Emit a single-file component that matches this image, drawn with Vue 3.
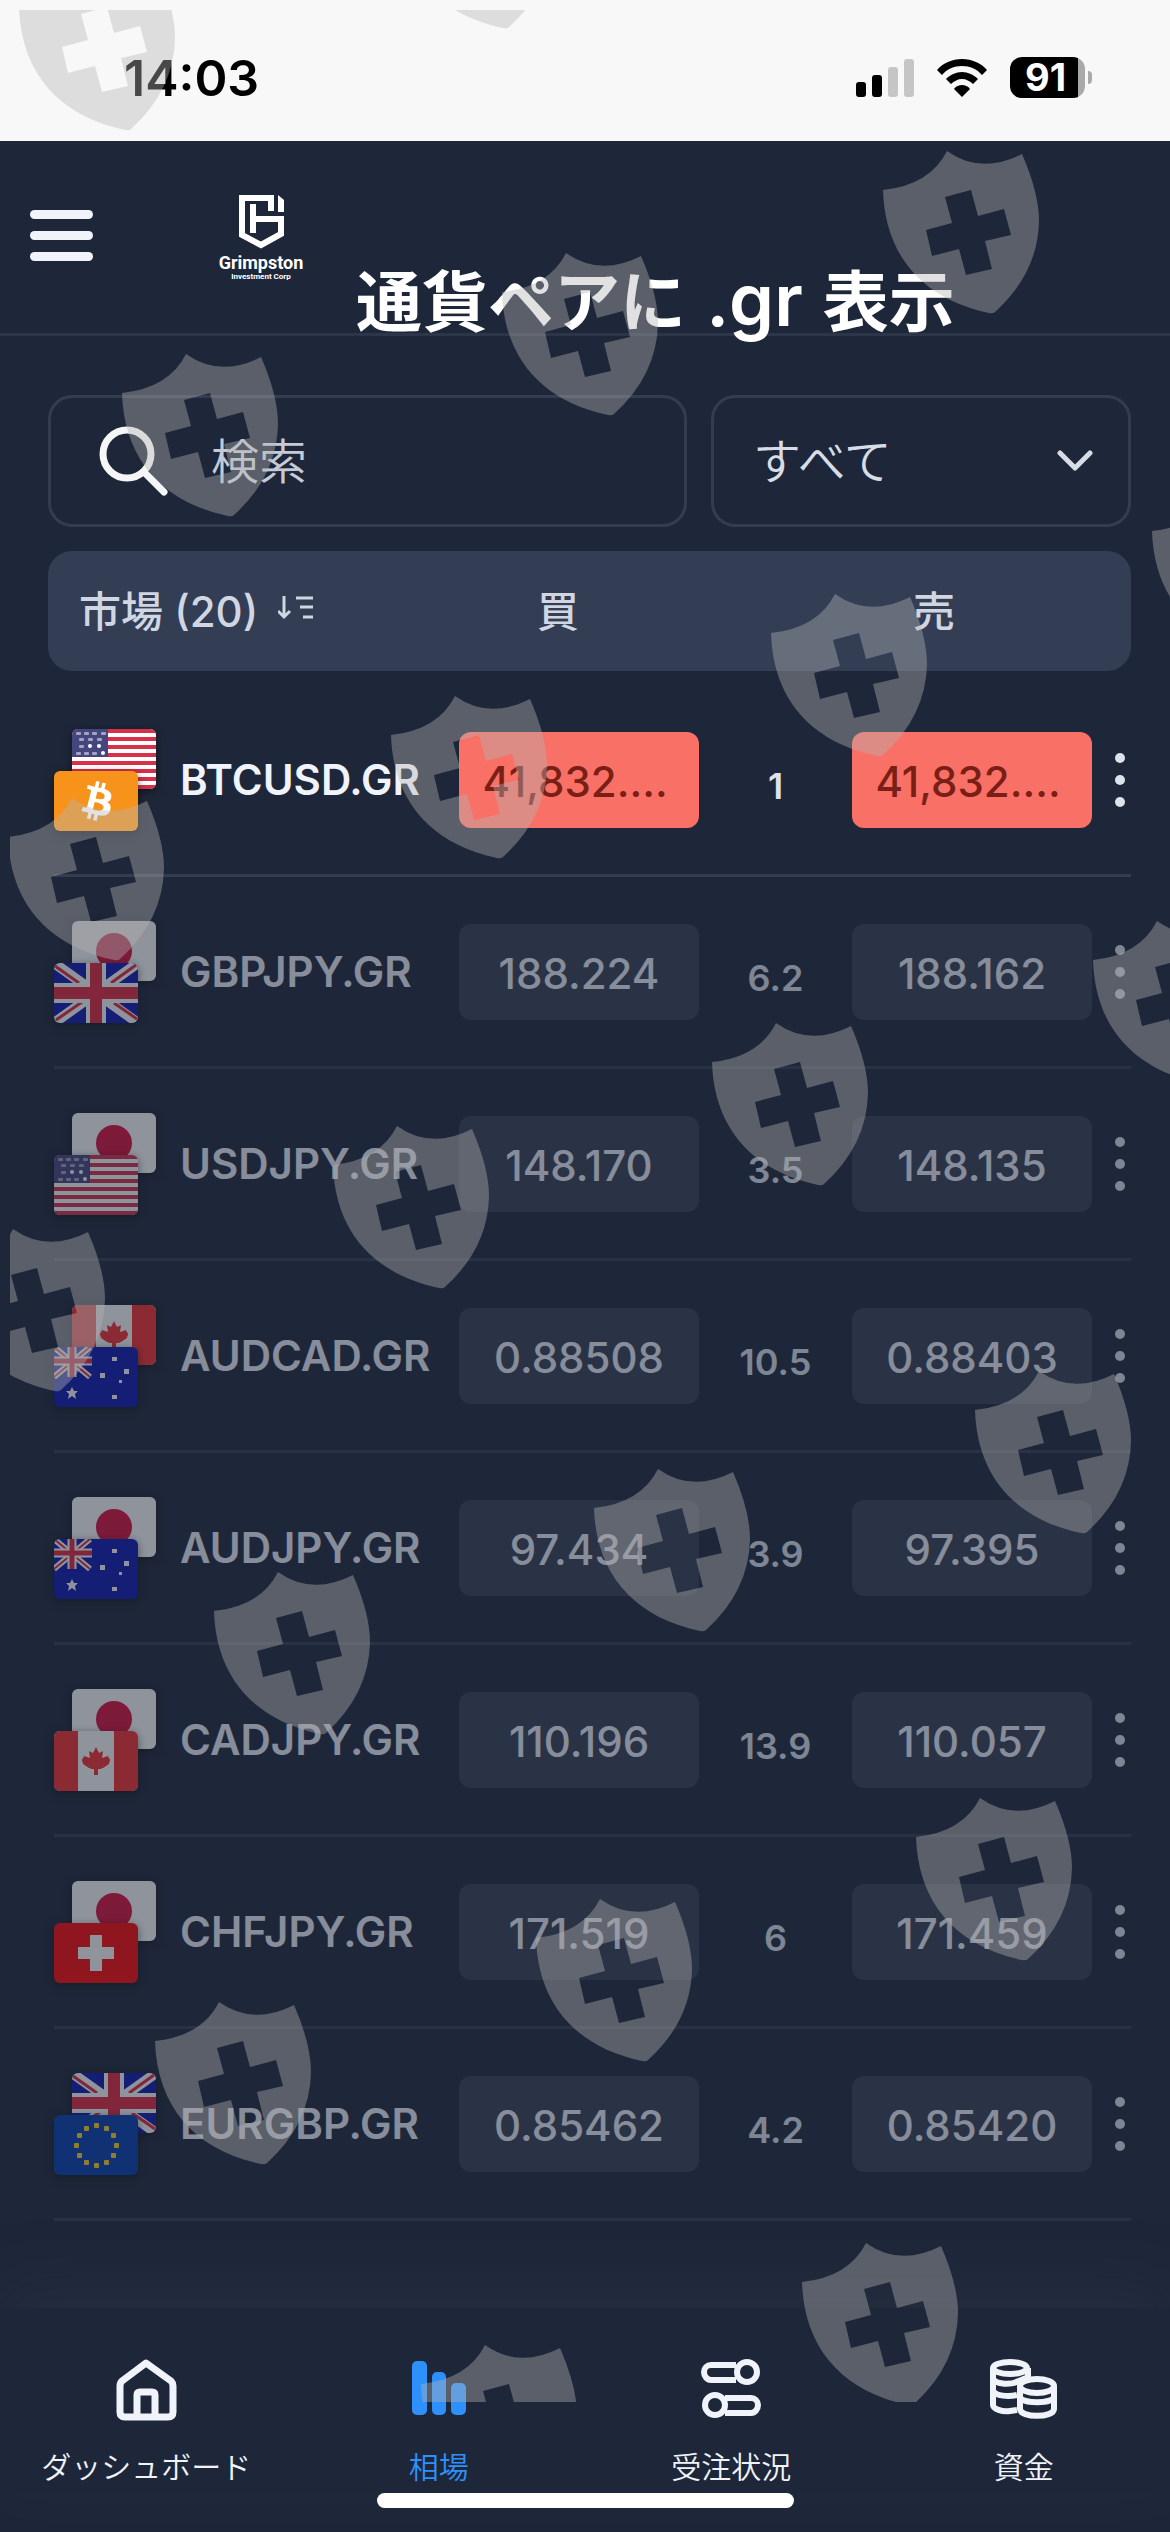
<script setup>
import { ref } from 'vue'

const search = ref('')
const filter = ref('all')

const markets = [
  { symbol: 'BTCUSD.GR', base: 'btc', quote: 'us', buy: '41,832.…', spread: '1', sell: '41,832.…', open: true },
  { symbol: 'GBPJPY.GR', base: 'gb', quote: 'jp', buy: '188.224', spread: '6.2', sell: '188.162' },
  { symbol: 'USDJPY.GR', base: 'us', quote: 'jp', buy: '148.170', spread: '3.5', sell: '148.135' },
  { symbol: 'AUDCAD.GR', base: 'au', quote: 'ca', buy: '0.88508', spread: '10.5', sell: '0.88403' },
  { symbol: 'AUDJPY.GR', base: 'au', quote: 'jp', buy: '97.434', spread: '3.9', sell: '97.395' },
  { symbol: 'CADJPY.GR', base: 'ca', quote: 'jp', buy: '110.196', spread: '13.9', sell: '110.057' },
  { symbol: 'CHFJPY.GR', base: 'ch', quote: 'jp', buy: '171.519', spread: '6', sell: '171.459' },
  { symbol: 'EURGBP.GR', base: 'eu', quote: 'gb', buy: '0.85462', spread: '4.2', sell: '0.85420' },
]

// Top-left corner of every watermark shield on the page canvas
const shields = [
  [19, -32], [397, -134], [883, 151], [502, 253], [122, 354], [1152, 492], [771, 594],
  [391, 696], [8, 798], [1093, 921], [712, 1023], [333, 1126], [-51, 1229], [975, 1371],
  [594, 1469], [214, 1572], [916, 1798], [536, 1899], [155, 2002], [802, 2243], [421, 2345],
]

const stripes = [0, 8, 16, 24, 32, 40, 48, 56]
const usDots = [[6, 4], [14, 4], [22, 4], [31, 4], [9, 10], [18, 10], [27, 10], [9, 17], [6, 24], [14, 24], [22, 24]]
const usStars = [[18, 17], [27, 17], [31, 24]]
const euStars = Array.from({ length: 12 }, (_, i) => {
  const a = (i * Math.PI) / 6
  return [Math.round(42 + 20 * Math.cos(a)), Math.round(30 + 20 * Math.sin(a))]
})
</script>

<template>
  <div class="screen">
    <svg class="sprite" aria-hidden="true">
      <defs>
        <symbol id="flag-us" viewBox="0 0 84 60">
          <rect width="84" height="60" fill="#fff" />
          <rect v-for="y in stripes" :key="y" :y="y" width="84" height="4" fill="#d82f4a" />
          <rect width="36" height="28" fill="#46467f" />
          <rect v-for="(d, i) in usDots" :key="'d' + i" :x="d[0] - 2" :y="d[1] - 1" width="5" height="3" rx="1" fill="#fff" opacity=".5" />
          <circle v-for="(d, i) in usStars" :key="'s' + i" :cx="d[0]" :cy="d[1]" r="2" fill="#fff" />
        </symbol>
        <symbol id="flag-btc" viewBox="0 0 84 60">
          <rect width="84" height="60" fill="#f7931a" />
          <path transform="translate(11 -2) scale(2)" fill="#fff" d="M23.189 14.02c.314-2.096-1.283-3.223-3.465-3.975l.708-2.84-1.728-.43-.69 2.765c-.454-.114-.92-.22-1.385-.326l.695-2.783L15.596 6l-.708 2.839c-.376-.086-.746-.17-1.104-.26l.002-.009-2.384-.595-.46 1.846s1.283.294 1.256.312c.7.175.826.638.805 1.006l-.806 3.235c.048.012.11.03.18.057l-.183-.045-1.13 4.532c-.086.212-.303.531-.793.41.018.025-1.256-.313-1.256-.313l-.858 1.978 2.25.561c.418.105.828.215 1.231.318l-.715 2.872 1.727.43.708-2.84c.472.127.93.245 1.378.357l-.706 2.828 1.728.43.715-2.866c2.948.558 5.164.333 6.097-2.333.752-2.146-.037-3.385-1.588-4.192 1.13-.26 1.98-1.003 2.207-2.538zm-3.95 5.538c-.533 2.147-4.148.986-5.32.695l.95-3.805c1.172.293 4.929.872 4.37 3.11zm.535-5.569c-.487 1.953-3.495.96-4.47.717l.86-3.45c.975.243 4.118.696 3.61 2.733z" />
        </symbol>
        <symbol id="flag-jp" viewBox="0 0 84 60">
          <rect width="84" height="60" fill="#fff" />
          <circle cx="42" cy="30" r="18" fill="#dc0f3b" />
        </symbol>
        <symbol id="flag-gb" viewBox="0 0 84 60">
          <rect width="84" height="60" fill="#0a17b0" />
          <path d="M0 0 84 60M84 0 0 60" stroke="#fff" stroke-width="10" />
          <path d="M1 3 25 20M57 20 82 2M2 57 28 39M60 40 83 56" stroke="#e6273e" stroke-width="3" />
          <path d="M42 0V60M0 30H84" stroke="#fff" stroke-width="20" />
          <path d="M42 0V60M0 30H84" stroke="#e6273e" stroke-width="12" />
        </symbol>
        <symbol id="flag-ca" viewBox="0 0 84 60">
          <rect width="84" height="60" fill="#fff" />
          <path d="M0 0H24V60H0zM60 0H84V60H60z" fill="#fa2d31" />
          <path fill="#fa2d31" d="M42 16 45 22 49 20 48 27 54 25 56 30 54 32 47 38H44V44H40V38H37L30 32 28 30 30 25 36 27 35 20 39 22z" />
          <path fill="#fa2d31" d="M28 28 32 26 40 30H44L52 26 56 28 55 33 49 37H35L29 33z" />
        </symbol>
        <symbol id="flag-au" viewBox="0 0 84 60">
          <rect width="84" height="60" fill="#0a17b0" />
          <path d="M0 0 36 30M36 0 0 30" stroke="#fff" stroke-width="6" />
          <path d="M0 0 36 30M36 0 0 30" stroke="#e6273e" stroke-width="2" />
          <path d="M18 0V30M0 14H38" stroke="#fff" stroke-width="9" />
          <path d="M18 0V30M0 14H38" stroke="#e6273e" stroke-width="5" />
          <path fill="#fff" d="M18 40 20 44 24 44 21 47 22 52 18 49 14 52 15 47 12 44 16 44z" />
          <path fill="#fff" d="M58 10h5v4h-5zM70 22h5v5h-5zM46 26h5v5h-5zM65 33h3v3h-3zM58 48h5v4h-5z" />
        </symbol>
        <symbol id="flag-ch" viewBox="0 0 84 60">
          <rect width="84" height="60" fill="#ff0505" />
          <path d="M36 12H48V24H60V36H48V48H36V36H24V24H36z" fill="#fff" />
        </symbol>
        <symbol id="flag-eu" viewBox="0 0 84 60">
          <rect width="84" height="60" fill="#043cae" />
          <rect v-for="(s, i) in euStars" :key="i" :x="s[0] - 2" :y="s[1] - 2" width="5" height="5" rx="1" fill="#ffd429" />
        </symbol>
      </defs>
    </svg>

    <div class="status-bar">
      <time class="clock">14:03</time>
      <div class="status-icons">
        <svg width="58" height="38" viewBox="0 0 58 38" aria-label="signal">
          <rect y="23" width="10" height="15" rx="3" />
          <rect x="16" y="16" width="10" height="22" rx="3" />
          <rect x="32" y="8" width="10" height="30" rx="3" fill="#c5c5c6" />
          <rect x="48" width="10" height="38" rx="3" fill="#c5c5c6" />
        </svg>
        <svg width="50" height="38" viewBox="0 0 50 38" aria-label="wifi">
          <path d="M25 0C35 0 44 4 50 11L45 16C40 10 33 7 25 7S10 10 5 16L0 11C6 4 15 0 25 0z" />
          <path d="M25 13C31 13 37 16 41 20L36 25C33 22 29 20 25 20S17 22 14 25L9 20C13 16 19 13 25 13z" />
          <path d="M25 26C28 26 31 27 33 30L25 38 17 30C19 27 22 26 25 26z" />
        </svg>
        <div class="battery"><span class="battery-level">91</span></div>
      </div>
    </div>

    <header class="app-header">
      <button class="menu-button" type="button" aria-label="メニュー">
        <span></span><span></span><span></span>
      </button>
      <a class="brand" href="#">
        <svg width="45" height="54" viewBox="0 0 45 54" fill="none" stroke="#fff" stroke-width="6" aria-hidden="true">
          <path d="M32 16V3H3V40L22 50 42 39V24H15" />
          <path d="M14 9V38" />
          <path d="M39 0 45 5V17H39z" fill="#fff" stroke="none" />
        </svg>
        <span class="brand-name">Grimpston</span>
        <span class="brand-sub">Investment Corp</span>
      </a>
      <h1 class="page-note">通貨ペアに<span class="suffix"> .gr </span>表示</h1>
    </header>

    <main class="content">
      <div class="filters">
        <label class="search">
          <svg width="70" height="70" viewBox="0 0 70 70" fill="none" stroke="#f5f6f6" aria-hidden="true">
            <circle cx="28" cy="28" r="24" stroke-width="7" />
            <path d="M45 46 65 66" stroke-width="7" stroke-linecap="round" />
          </svg>
          <input v-model="search" type="text" placeholder="検索" aria-label="検索" />
        </label>
        <label class="category">
          <select v-model="filter" aria-label="カテゴリ">
            <option value="all">すべて</option>
          </select>
          <svg width="36" height="22" viewBox="0 0 36 22" fill="none" stroke="#d8dce6" stroke-width="5" stroke-linecap="round" stroke-linejoin="round" aria-hidden="true">
            <path d="M3 3 18 18 33 3" />
          </svg>
        </label>
      </div>

      <table class="markets">
        <thead>
          <tr>
            <th class="market-head" scope="col">
              市場 (20)
              <svg width="36" height="24" viewBox="0 0 36 24" fill="none" stroke="#d0d6e2" stroke-width="3" aria-hidden="true">
                <path d="M6 0V20M0 15 6 21 12 15" />
                <path d="M18 2H35M22 11H35M25 21H35" />
              </svg>
            </th>
            <th scope="col">買</th>
            <th></th>
            <th scope="col">売</th>
            <th></th>
          </tr>
        </thead>
        <tbody>
          <tr v-for="m in markets" :key="m.symbol" :class="{ closed: !m.open }">
            <td class="pair">
              <span class="flags">
                <svg class="flag quote" viewBox="0 0 84 60" aria-hidden="true"><use :href="'#flag-' + m.quote" /></svg>
                <svg class="flag base" viewBox="0 0 84 60" aria-hidden="true"><use :href="'#flag-' + m.base" /></svg>
              </span>
              <span class="symbol">{{ m.symbol }}</span>
            </td>
            <td><button class="price" :class="{ down: m.open }" type="button">{{ m.buy }}</button></td>
            <td class="spread">{{ m.spread }}</td>
            <td><button class="price" :class="{ down: m.open }" type="button">{{ m.sell }}</button></td>
            <td class="more-cell">
              <button class="more" type="button" aria-label="詳細"><i></i><i></i><i></i></button>
            </td>
          </tr>
        </tbody>
      </table>
    </main>

    <nav class="tabs">
      <a href="#">
        <svg width="61" height="62" viewBox="0 0 61 62" fill="none" stroke="currentColor" stroke-width="7" stroke-linejoin="round" aria-hidden="true">
          <path d="M30 4 6 22Q4 24 4 27V53Q4 58 9 58H52Q57 58 57 53V27Q57 24 55 22z" />
          <path d="M21 58V36Q21 33 24 33H36Q39 33 39 36V58" />
        </svg>
        <span>ダッシュボード</span>
      </a>
      <a class="active" href="#" aria-current="page">
        <svg width="54" height="62" viewBox="0 0 54 62" fill="currentColor" aria-hidden="true">
          <rect y="2" width="15" height="54" rx="5" />
          <rect x="20" y="13" width="14" height="43" rx="5" />
          <rect x="39" y="24" width="15" height="32" rx="5" />
        </svg>
        <span>相場</span>
      </a>
      <a href="#">
        <svg width="60" height="62" viewBox="0 0 60 62" fill="none" stroke="currentColor" stroke-width="6" aria-hidden="true">
          <path d="M35 6H10C6 6 3 9 3 13S6 21 10 21H35" />
          <ellipse cx="46" cy="13" rx="10" ry="10" />
          <ellipse cx="14" cy="46" rx="10" ry="10" />
          <path d="M24 39H50C54 39 57 42 57 46S54 54 50 54H24" />
        </svg>
        <span>受注状況</span>
      </a>
      <a href="#">
        <svg width="68" height="62" viewBox="0 0 68 62" fill="none" stroke="currentColor" stroke-width="6" aria-hidden="true">
          <path d="M3 9V46C3 50 12 53 20 52L27 51M38 9V18" />
          <ellipse cx="20" cy="9" rx="17" ry="6" />
          <path d="M3 20C6 25 18 26 27 23M3 32C6 37 18 38 27 36M38 9V20M24 24 36 19" />
          <ellipse cx="47" cy="27" rx="17" ry="7" />
          <path d="M30 27V50C30 59 64 59 64 50V27M30 38C32 45 62 45 64 38" />
        </svg>
        <span>資金</span>
      </a>
    </nav>
    <div class="home-indicator"></div>

    <div class="watermark" aria-hidden="true">
      <svg width="1160" height="2392" viewBox="10 10 1160 2392">
        <defs>
          <path id="shield" fill-rule="evenodd" d="M0 39Q47 34 64 0Q98 24 139 3Q156 42 156 70Q155 122 112 161Q110 163 106 162C40 148 2 105 0 39zM62 46 69 72 43 79 49 105 76 98 83 124 109 118 102 90 128 84 121 58 95 65 88 39z" />
        </defs>
        <use v-for="(s, i) in shields" :key="i" href="#shield" :x="s[0]" :y="s[1]" fill="#b4b4b4" fill-opacity=".4" />
      </svg>
    </div>
  </div>
</template>

<style>
body {
  margin: 0;
  background: #1e2739;
}
</style>

<style scoped>
.screen {
  position: relative;
  display: flex;
  flex-direction: column;
  min-height: 100vh;
  overflow: hidden;
  background: #1e2739;
  color: #f0f3fa;
  font-family: Inter, "Noto Sans CJK JP", sans-serif;
}
.screen * {
  box-sizing: border-box;
}
.sprite {
  position: absolute;
  width: 0;
  height: 0;
}
button,
input,
select {
  font: inherit;
  color: inherit;
}
button {
  padding: 0;
  border: 0;
  background: none;
}

/* Status bar */
.status-bar {
  display: flex;
  align-items: center;
  justify-content: space-between;
  height: 141px;
  padding: 14px 80px 0 124px;
  background: #f8f8f8;
  color: #000;
}
.clock {
  font-size: 50px;
  font-weight: 600;
}
.status-icons {
  display: flex;
  align-items: center;
  gap: 23px;
}
.battery {
  position: relative;
  width: 75px;
  height: 41px;
  margin-right: 5px;
  border-radius: 12px;
  background: linear-gradient(90deg, #000 68px, #a9a9aa 68px);
}
.battery::after {
  content: "";
  position: absolute;
  right: -7px;
  top: 14px;
  width: 4px;
  height: 13px;
  border-radius: 0 4px 4px 0;
  background: #a9a9aa;
}
.battery-level {
  display: block;
  padding-right: 4px;
  color: #fff;
  font-size: 38px;
  font-weight: 700;
  line-height: 41px;
  text-align: center;
}

/* Header */
.app-header {
  display: flex;
  align-items: center;
  height: 195px;
  padding-left: 30px;
  border-bottom: 3px solid #2d3648;
}
.menu-button {
  display: flex;
  flex-direction: column;
  gap: 12px;
  width: 63px;
  margin-bottom: 4px;
}
.menu-button span {
  height: 9px;
  border-radius: 5px;
  background: #f0f3fa;
}
.brand {
  display: flex;
  flex-direction: column;
  align-items: center;
  width: 90px;
  margin: 2px 0 0 123px;
  color: #fff;
  font-family: Roboto, Inter, sans-serif;
  font-weight: 700;
  text-decoration: none;
}
.brand-name {
  margin-top: 4px;
  font-size: 18px;
  line-height: 20px;
}
.brand-sub {
  font-size: 8px;
  line-height: 8px;
}
.page-note {
  align-self: flex-end;
  margin: 0 0 0 50px;
  color: #fff;
  font-size: 66px;
  font-weight: 600;
  line-height: 62px;
  white-space: nowrap;
}
.suffix {
  padding: 0 2px;
  font-size: 72px;
}

/* Filters */
.content {
  flex: 1;
  padding: 59px 39px 0 48px;
}
.filters {
  display: flex;
  gap: 24px;
}
.search,
.category {
  display: flex;
  align-items: center;
  height: 132px;
  border: 3px solid #343d50;
  border-radius: 24px;
}
.search {
  flex: 1;
  min-width: 0;
  gap: 42px;
  padding-left: 48px;
}
.search svg {
  flex: none;
}
.search input {
  flex: 1;
  min-width: 0;
  padding: 0;
  border: 0;
  background: none;
  font-size: 48px;
  font-weight: 350;
}
.search input::placeholder {
  color: #c5cad6;
  opacity: 1;
}
.category {
  flex: none;
  width: 420px;
  padding: 0 35px 0 39px;
  color: #d8dce6;
}
.category select {
  flex: 1;
  min-width: 0;
  padding: 0;
  border: 0;
  background: none;
  appearance: none;
  font-size: 48px;
  font-weight: 350;
}

/* Market table */
.markets,
.markets thead,
.markets tbody {
  display: block;
}
.markets tr {
  display: grid;
  align-items: center;
}
.markets th,
.markets td {
  padding: 0;
}
.markets thead tr {
  grid-template-columns: 1fr 198px 178px 198px 98px;
  height: 120px;
  margin: 24px 0 14px;
  padding-bottom: 6px;
  border-radius: 24px;
  background: #333e55;
  color: #d0d6e2;
  font-size: 42px;
}
.markets th {
  font-weight: 500;
}
.markets .market-head {
  display: flex;
  align-items: center;
  gap: 20px;
  padding-left: 31px;
}
.markets tbody tr {
  grid-template-columns: 1fr 240px 153px 240px 39px;
  height: 192px;
  margin-left: 6px;
  border-bottom: 3px solid #343d50;
}
.markets tbody tr.closed {
  opacity: .5;
}
.pair {
  display: flex;
  align-items: center;
  gap: 24px;
}
.flags {
  display: grid;
  width: 102px;
  height: 102px;
}
.flag {
  grid-area: 1 / 1;
  width: 84px;
  height: 60px;
  border-radius: 6px;
  box-shadow: 0 2px 8px rgba(0, 0, 0, .5);
}
.flag.quote {
  justify-self: end;
}
.flag.base {
  align-self: end;
}
.symbol {
  font-size: 42px;
  font-weight: 600;
}
.price {
  display: block;
  width: 100%;
  height: 96px;
  padding-top: 4px;
  border-radius: 12px;
  background: #363f52;
  color: #f0f3fa;
  font-size: 42px;
  font-weight: 500;
}
.price.down {
  padding-right: 8px;
  background: #f97066;
  color: #7a1f16;
}
.spread {
  color: #dde2ec;
  font-size: 36px;
  font-weight: 600;
  text-align: center;
}
.markets td.spread {
  padding-top: 12px;
}
.more-cell {
  display: flex;
  justify-content: flex-end;
}
.more {
  display: flex;
  flex-direction: column;
  gap: 12px;
  padding: 12px 6px;
}
.more i {
  width: 10px;
  height: 10px;
  border-radius: 50%;
  background: #dde2ec;
}

/* Bottom navigation */
.tabs {
  display: grid;
  grid-template-columns: repeat(4, 1fr);
  height: 185px;
  background: #1e2739;
  box-shadow: 0 -20px 60px rgba(52, 61, 80, .3);
}
.tabs a {
  display: flex;
  flex-direction: column;
  align-items: center;
  gap: 24px;
  padding-top: 51px;
  color: #f0f3fa;
  font-size: 30px;
  font-weight: 350;
  line-height: 44px;
  text-decoration: none;
}
.tabs a.active {
  color: #2e90fa;
}
.home-indicator {
  align-self: center;
  width: 417px;
  height: 15px;
  margin-bottom: 24px;
  border-radius: 8px;
  background: #fff;
}

/* Watermark lies over the whole page */
.watermark {
  position: absolute;
  top: 10px;
  right: 0;
  bottom: 130px;
  left: 10px;
  overflow: hidden;
  pointer-events: none;
}
.watermark svg {
  display: block;
}
</style>
